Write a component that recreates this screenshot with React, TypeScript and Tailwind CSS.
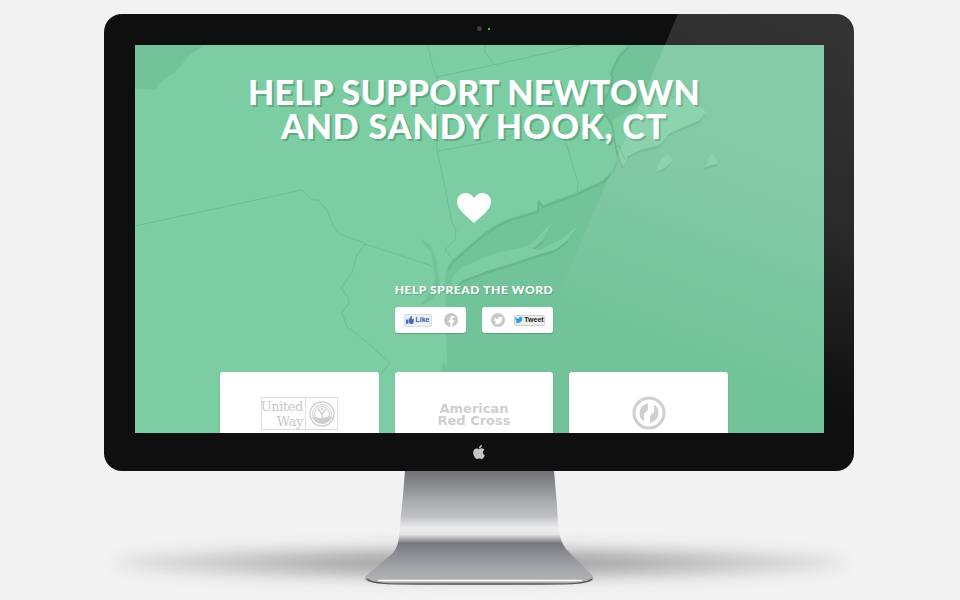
import { FaApple, FaFacebookF, FaThumbsUp, FaTwitter } from 'react-icons/fa';

const LAND_SHADOW = '#68b68e';
const WATER = '#72c39a';
const LAND = '#7dcda3';
const BORDER = '#6dbd94';

const borders = [
  'M135 226 L302 190 L312 200 L318 200 L327 210 L333 225 L338 233 L350 238 L363 242 L365 244 L432 266',
  'M365 244 L357 255 L352 273 L341 288 L348 297 L349 303 L342 313 L347 327 L358 335 L370 345 L390 363 L380 375',
  'M428 45 L433 68 L437 77 L435 110 L437 150 L445 187 L452 223 L456 230 L455 240 L445 250 L452 258',
  'M437 77 L530 57 L580 45',
  'M438 151 L488 142 L530 130 L563 133 L578 183 L577 192',
  'M485 45 L485 52 L495 65',
  'M563 133 L600 122',
  'M615 145 L620 147 L625 160',
];

const coast = 'M447 268 L452 260 L468 246 L483 233 L497 224 L510 218 L537 210 L538 200 L542 205 L577 192 L603 180 L612 170 L618 155 L622 150 L612 125 L600 105 L608 90 L612 75 L610 72 L618 55 L628 45';

// cape cod, long island and the other bits of land sitting in the water
const islands = [
  'M612 120 L640 105 L650 98 L695 100 L706 112 L700 120 L670 133 L660 145 L640 150 L628 156 L623 167 L617 150 Z',
  'M656 172 L660 160 L668 154 L673 160 L665 168 Z',
  'M705 167 L709 158 L712 153 L718 163 Z',
  'M452 277 L463 267 L483 258 L500 252 L520 248 L530 245 L548 226 L552 224 L543 240 L533 249 L540 250 L560 240 L577 227 L568 240 L555 250 L540 254 L513 263 L490 270 L463 280 L450 292 Z',
];

function MapBackdrop() {
  return (
    <svg className="absolute inset-0 h-full w-full" viewBox="135 45 689 388" aria-hidden="true">
      <path d="M135 45 H205 L190 55 L175 72 L160 82 L155 90 L135 88 Z" fill={WATER} />
      <path d={`${coast} H824 V433 H447 V372 L440 372 L443 362 L447 368 L446 313 L445 280 Z`} fill={WATER} />
      <path d="M420 237 L424 245 L431 252 L435 277 L430 293 L420 306 L432 300 L440 285 L437 262 L432 247 L423 240 Z" fill={WATER} />
      <path d={coast} fill="none" stroke={LAND_SHADOW} strokeWidth="2" transform="translate(1 2)" />
      {islands.map((d) => (
        <g key={d}>
          <path d={d} fill={LAND_SHADOW} transform="translate(-1 3)" />
          <path d={d} fill={LAND} />
        </g>
      ))}
      {borders.map((d) => (
        <path key={d} d={d} fill="none" stroke={BORDER} strokeWidth="1" />
      ))}
    </svg>
  );
}

function UnitedWayLogo() {
  return (
    <div className="mt-[25px] flex h-[33px] w-[77px] border border-[#dedede]">
      <div className="flex w-[44px] flex-col items-end justify-center border-r border-[#dedede] pr-[2px] font-['DejaVu_Serif',serif] text-[13px] leading-[15px] tracking-[-0.4px] text-[#c8c8c8]">
        <span>United</span>
        <span>Way</span>
      </div>
      <div className="flex flex-1 items-center justify-center">
        <svg width="26" height="26" viewBox="0 0 26 26" fill="none" stroke="#cfcfcf">
          <circle cx="13" cy="13" r="12" strokeWidth="1.4" />
          <circle cx="13" cy="13" r="9.5" strokeWidth="1" />
          <circle cx="13" cy="13" r="7.5" strokeWidth="1" />
          <path d="M9 8 L13 13 L17 8 M13 13 V18" strokeWidth="1.4" />
          <circle cx="13" cy="8" r="1.2" fill="#cfcfcf" stroke="none" />
          <path d="M3 16 C8 15 10 18 14 17 L21 15 L23 17 C20 24 7 25 3 16 Z" fill="#cfcfcf" stroke="none" />
        </svg>
      </div>
    </div>
  );
}

function RedCrossLogo() {
  return (
    <div className="mt-[31px] text-center font-['DejaVu_Sans',sans-serif] text-[13px] font-bold leading-[12px] text-[#cfcfcf]">
      <div>American</div>
      <div>Red Cross</div>
    </div>
  );
}

function RingLogo() {
  return (
    <svg className="mt-[24px]" width="34" height="34" viewBox="0 0 34 34">
      <circle cx="17" cy="17" r="15" fill="none" stroke="#cfcfcf" strokeWidth="3" />
      <path d="M16 7.2 V14 L12 18 V25.4 A10 10 0 0 1 16 7.2 Z" fill="#cfcfcf" />
      <path d="M16 7.2 V14 L12 18 V25.4 A10 10 0 0 1 16 7.2 Z" fill="#cfcfcf" transform="rotate(180 17 17)" />
    </svg>
  );
}

function Stand() {
  return (
    <svg className="block" width="230" height="114" viewBox="364 471 230 114" aria-hidden="true">
      <defs>
        <linearGradient id="steel" gradientUnits="userSpaceOnUse" x1="0" y1="471" x2="0" y2="584">
          <stop offset="0" stopColor="#707174" />
          <stop offset="0.26" stopColor="#a8a9ab" />
          <stop offset="0.4" stopColor="#c0c1c3" />
          <stop offset="0.5" stopColor="#ebebec" />
          <stop offset="0.56" stopColor="#e6e6e7" />
          <stop offset="0.64" stopColor="#77787b" />
          <stop offset="0.72" stopColor="#8a8b8e" />
          <stop offset="0.88" stopColor="#a6a7aa" />
          <stop offset="1" stopColor="#b4b5b7" />
        </linearGradient>
      </defs>
      <path
        d="M405 471 H554 L557 505 C558 525 558 538 566 549 L591 574 C595 578 594 581 589 582 C570 585 390 585 369 582 C364 581 363 578 367 575 L392 554 C398 548 399 540 400 525 L403 495 Z"
        fill="url(#steel)"
      />
      <path d="M367 579 C372 584 390 584 420 584 H540 C570 584 586 584 592 579" fill="none" stroke="#55565a" strokeWidth="1.5" />
      <path d="M378 580.5 H582" stroke="#ffffff" strokeWidth="1.5" />
    </svg>
  );
}

export default function App() {
  return (
    <div className="relative flex h-[600px] w-[960px] flex-col items-center overflow-hidden bg-[#f2f2f2] pr-[2px] pt-[14px] font-['Lato',sans-serif]">
      {/* ground shadow */}
      <div className="absolute left-[115px] top-[545px] h-[36px] w-[730px] rounded-[50%] bg-[radial-gradient(ellipse_at_center,#9c9c9c_0%,#a8a8a8_28%,#d2d2d2_58%,#ececec_85%,transparent_100%)] blur-[7px]" />

      {/* bezel */}
      <div className="relative z-10 h-[457px] w-[750px] shrink-0 overflow-hidden rounded-[18px] bg-[#0f0f0f]">
        <div className="flex h-[31px] items-center justify-center gap-[6px] pb-[2px] pl-[8px]">
          <span className="h-[5px] w-[5px] rounded-full bg-[#3d3d3d]" />
          <span className="h-[2px] w-[2px] bg-[#3fbf2a]" />
        </div>

        <div className="relative ml-[31px] h-[388px] w-[689px] overflow-hidden bg-[#7dcda3]">
          <MapBackdrop />
          <div className="relative flex h-full flex-col items-center pr-[11px] [&>*]:shrink-0">
            <h1 className="mt-[30px] text-center text-[34px] font-black uppercase leading-[34px] text-white [text-shadow:2px_2px_0_#60ab85]">
              <span className="block tracking-[0.3px]">Help Support Newtown</span>
              <span className="block tracking-[0.9px]">and Sandy Hook, CT</span>
            </h1>

            <svg className="mt-[50px]" width="34" height="30" viewBox="0 0 34 30" fill="#ffffff" aria-hidden="true">
              <path d="M17 30 C12 25 0 17 0 9 C0 3.5 4 0 8.5 0 C12 0 15 2 17 5 C19 2 22 0 25.5 0 C30 0 34 3.5 34 9 C34 17 22 25 17 30 Z" />
            </svg>

            <p className="mt-[59px] text-[12px] font-black uppercase leading-[16px] tracking-[0.6px] text-white [text-shadow:1px_1px_0_#60ab85]">
              Help Spread the Word
            </p>

            <div className="mt-[9px] flex gap-[16px]">
              <div className="flex h-[26px] w-[71px] items-center gap-[12px] rounded-[3px] bg-white pl-[9px] shadow-[0_1px_1px_#5a9f7c]">
                <div className="flex h-[13px] w-[28px] items-center justify-center gap-[1px] rounded-[2px] border border-[#d6dcee] bg-[#eceef5] font-['Liberation_Sans',sans-serif] text-[7px] font-bold text-[#3b5998]">
                  <FaThumbsUp className="text-[8px] text-[#4a6db5]" />
                  Like
                </div>
                <div className="flex h-[14px] w-[14px] items-end justify-center overflow-hidden rounded-full bg-[#c8c8c8]">
                  <FaFacebookF className="text-[11px] text-white" />
                </div>
              </div>
              <div className="flex h-[26px] w-[71px] items-center gap-[9px] rounded-[3px] bg-white pl-[9px] shadow-[0_1px_1px_#5a9f7c]">
                <div className="flex h-[14px] w-[14px] items-center justify-center rounded-full bg-[#c8c8c8]">
                  <FaTwitter className="text-[9px] text-white" />
                </div>
                <div className="flex h-[11px] w-[31px] items-center justify-center gap-[1px] rounded-[2px] border border-[#cfcfcf] bg-[#eeeeee] font-['Liberation_Sans',sans-serif] text-[7px] font-bold text-[#222222]">
                  <FaTwitter className="text-[8px] text-[#2d9fe0]" />
                  Tweet
                </div>
              </div>
            </div>

            <div className="mt-[39px] flex gap-[16px]">
              <div className="flex h-[90px] w-[159px] justify-center rounded-[3px] bg-white shadow-[0_1px_1px_#5a9f7c]">
                <UnitedWayLogo />
              </div>
              <div className="flex h-[90px] w-[158px] justify-center rounded-[3px] bg-white shadow-[0_1px_1px_#5a9f7c]">
                <RedCrossLogo />
              </div>
              <div className="flex h-[90px] w-[159px] justify-center rounded-[3px] bg-white shadow-[0_1px_1px_#5a9f7c]">
                <RingLogo />
              </div>
            </div>
          </div>
        </div>

        <div className="flex h-[38px] items-center justify-center">
          <FaApple className="text-[16px] text-[#c4c4c4]" />
        </div>

        {/* glass reflection */}
        <svg className="pointer-events-none absolute inset-0" width="750" height="457" viewBox="104 14 750 457" aria-hidden="true">
          <defs>
            <linearGradient id="glare" gradientUnits="userSpaceOnUse" x1="760" y1="20" x2="640" y2="340">
              <stop offset="0" stopColor="#ffffff" stopOpacity="0.15" />
              <stop offset="0.5" stopColor="#ffffff" stopOpacity="0.11" />
              <stop offset="1" stopColor="#ffffff" stopOpacity="0" />
            </linearGradient>
          </defs>
          <polygon points="678,14 854,14 854,471 484,471" fill="url(#glare)" />
        </svg>
      </div>

      <div className="relative z-10 shrink-0">
        <Stand />
      </div>
    </div>
  );
}
